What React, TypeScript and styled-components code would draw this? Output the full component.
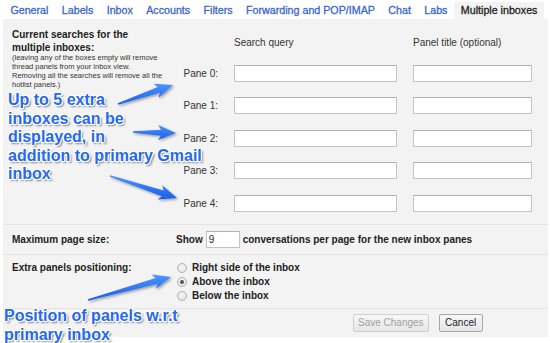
import styled, { createGlobalStyle } from "styled-components";

const GlobalStyle = createGlobalStyle`
  html, body {
    margin: 0;
    padding: 0;
    background: #ffffff;
  }
  body {
    font-family: "Liberation Sans", Arial, sans-serif;
  }
`;

const Page = styled.div`
  position: relative;
  width: 550px;
  height: 343px;
  overflow: hidden;
  background: #ffffff;
  color: #222222;
  font-family: "Liberation Sans", Arial, sans-serif;
`;

const TabBar = styled.div`
  display: flex;
  align-items: flex-end;
  height: 19px;
  padding-left: 4px;
  gap: 0.6px;
`;

const Tab = styled.div<{ $active?: boolean }>`
  height: 17px;
  line-height: 17px;
  padding: 0 6.4px;
  font-size: 10.7px;
  white-space: nowrap;
  color: ${(p) => (p.$active ? "#222222" : "#3b66d0")};
  background: ${(p) => (p.$active ? "#f3f3f3" : "transparent")};
  -webkit-text-stroke: 0.3px currentColor;
`;

const Panel = styled.div`
  margin: 0 2px 0 3px;
  height: 318px;
  background: #f3f3f3;
`;

const Section = styled.div`
  display: grid;
  grid-template-columns: 164px 1fr;
  padding-left: 9px;
  border-bottom: 1px solid #e4e4e4;
`;

const SearchSection = styled(Section)`
  grid-template-columns: 160px 1fr;
  padding-top: 9px;
  height: 196px;
`;

const Intro = styled.div``;

const Heading = styled.div`
  font-size: 10px;
  font-weight: bold;
  line-height: 13px;
`;

const Note = styled.div`
  margin-top: -1px;
  font-size: 7.5px;
  line-height: 9px;
  color: #333333;
  white-space: nowrap;
`;

const PaneGrid = styled.div`
  display: grid;
  grid-template-columns: 46px 163px 119px;
  grid-template-rows: 13px;
  grid-auto-rows: 17px;
  column-gap: 16px;
  row-gap: 15.5px;
  margin-top: 8px;
  align-items: center;
`;

const ColHead = styled.div`
  font-size: 10px;
  line-height: 13px;
  color: #333333;
`;

const PaneLabel = styled.div`
  font-size: 10px;
  text-align: right;
  color: #333333;
`;

const TextBox = styled.div<{ $w?: number }>`
  box-sizing: border-box;
  height: 17px;
  width: ${(p) => (p.$w ? `${p.$w}px` : "auto")};
  background: #ffffff;
  border: 1px solid #c4c4c4;
  border-top-color: #b0b0b0;
  font-size: 10px;
  line-height: 15px;
  padding-left: 2px;
`;

const RowSection = styled(Section)`
  height: 29px;
  align-items: center;
`;

const BoldText = styled.span`
  font-size: 10px;
  font-weight: bold;
  line-height: 14px;
`;

const Inline = styled.div`
  display: flex;
  align-items: center;
  gap: 3px;
`;

const RadioSection = styled(Section)`
  padding-top: 6px;
  height: 47px;
  align-items: start;
`;

const RadioList = styled.div`
  display: flex;
  flex-direction: column;
  padding-left: 1px;
`;

const RadioRow = styled.div`
  display: flex;
  align-items: center;
  gap: 5px;
  height: 14px;
`;

const Radio = styled.span<{ $checked?: boolean }>`
  box-sizing: border-box;
  width: 10px;
  height: 10px;
  border-radius: 50%;
  border: 1px solid #b3b3b3;
  background: radial-gradient(circle at 50% 40%, #f8f8f8 0%, #dcdcdc 100%);
  display: flex;
  align-items: center;
  justify-content: center;
  &::after {
    content: "";
    width: 4px;
    height: 4px;
    border-radius: 50%;
    background: #555555;
    display: ${(p) => (p.$checked ? "block" : "none")};
  }
`;

const Actions = styled.div`
  display: flex;
  gap: 10px;
  padding: 5px 0 0 350px;
`;

const Button = styled.div<{ $disabled?: boolean }>`
  box-sizing: border-box;
  height: 18px;
  line-height: 16px;
  padding: 0 4px;
  min-width: 44px;
  text-align: center;
  font-size: 10px;
  color: ${(p) => (p.$disabled ? "#a0a0a0" : "#222222")};
  border: 1px solid ${(p) => (p.$disabled ? "#cfcfcf" : "#a8a8a8")};
  border-radius: 2px;
  background: linear-gradient(#f8f8f8, #e6e6e6);
`;

const Callout = styled.div<{ $top: number; $left: number }>`
  position: absolute;
  top: ${(p) => p.$top}px;
  left: ${(p) => p.$left}px;
  font-size: 16px;
  font-weight: bold;
  line-height: 18.6px;
  color: #2569f0;
  text-shadow: -1px -1px 0 #fff, 1px -1px 0 #fff, -1px 1px 0 #fff,
    1px 1px 0 #fff, 0 1px 0 #fff, 1px 0 0 #fff, 2px 2px 2px rgba(0, 0, 0, 0.5);
  white-space: nowrap;
`;

const Overlay = styled.svg`
  position: absolute;
  left: 0;
  top: 0;
  pointer-events: none;
`;

const tabs = [
  "General",
  "Labels",
  "Inbox",
  "Accounts",
  "Filters",
  "Forwarding and POP/IMAP",
  "Chat",
  "Labs",
  "Multiple inboxes",
];

const arrows: [number, number, number, number][] = [
  [118, 104, 173, 85],
  [133, 132, 176, 133],
  [110, 176, 177, 198],
  [88, 300, 171, 277],
];

function arrowPoints(x1: number, y1: number, x2: number, y2: number) {
  const dx = x2 - x1;
  const dy = y2 - y1;
  const len = Math.hypot(dx, dy);
  const ux = dx / len;
  const uy = dy / len;
  const nx = -uy;
  const ny = ux;
  const head = 15;
  const nkx = x2 - ux * head;
  const nky = y2 - uy * head;
  const bx = x2 - ux * (head + 3);
  const by = y2 - uy * (head + 3);
  const p = (x: number, y: number) => `${x.toFixed(1)},${y.toFixed(1)}`;
  return [
    p(x1 + nx * 0.8, y1 + ny * 0.8),
    p(nkx + nx * 3, nky + ny * 3),
    p(bx + nx * 7.5, by + ny * 7.5),
    p(x2, y2),
    p(bx - nx * 7.5, by - ny * 7.5),
    p(nkx - nx * 3, nky - ny * 3),
    p(x1 - nx * 0.8, y1 - ny * 0.8),
  ].join(" ");
}

const panes = [0, 1, 2, 3, 4];

export default function App() {
  return (
    <Page>
      <GlobalStyle />
      <TabBar>
        {tabs.map((t) => (
          <Tab key={t} $active={t === "Multiple inboxes"}>
            {t}
          </Tab>
        ))}
      </TabBar>
      <Panel>
        <SearchSection>
          <Intro>
            <Heading>
              Current searches for the
              <br />
              multiple inboxes:
            </Heading>
            <Note>
              (leaving any of the boxes empty will remove
              <br />
              thread panels from your inbox view.
              <br />
              Removing all the searches will remove all the
              <br />
              hotlist panels.)
            </Note>
          </Intro>
          <PaneGrid>
            <span />
            <ColHead>Search query</ColHead>
            <ColHead>Panel title (optional)</ColHead>
            {panes.map((n) => [
              <PaneLabel key={`l${n}`}>Pane {n}:</PaneLabel>,
              <TextBox key={`q${n}`} />,
              <TextBox key={`t${n}`} />,
            ])}
          </PaneGrid>
        </SearchSection>
        <RowSection>
          <BoldText>Maximum page size:</BoldText>
          <Inline>
            <BoldText>Show</BoldText>
            <TextBox $w={34}>9</TextBox>
            <BoldText>conversations per page for the new inbox panes</BoldText>
          </Inline>
        </RowSection>
        <RadioSection>
          <BoldText>Extra panels positioning:</BoldText>
          <RadioList>
            <RadioRow>
              <Radio />
              <BoldText>Right side of the inbox</BoldText>
            </RadioRow>
            <RadioRow>
              <Radio $checked />
              <BoldText>Above the inbox</BoldText>
            </RadioRow>
            <RadioRow>
              <Radio />
              <BoldText>Below the inbox</BoldText>
            </RadioRow>
          </RadioList>
        </RadioSection>
        <Actions>
          <Button $disabled>Save Changes</Button>
          <Button>Cancel</Button>
        </Actions>
      </Panel>

      <Callout $top={91} $left={8}>
        Up to 5 extra
        <br />
        inboxes can be
        <br />
        displayed, in
        <br />
        addition to primary Gmail
        <br />
        inbox
      </Callout>
      <Callout $top={307} $left={4}>
        Position of panels w.r.t
        <br />
        primary inbox
      </Callout>

      <Overlay width="550" height="343" viewBox="0 0 550 343">
        <defs>
          <linearGradient id="arrowFill" x1="0" y1="0" x2="0" y2="1">
            <stop offset="0" stopColor="#4b94ff" />
            <stop offset="1" stopColor="#1a5fe6" />
          </linearGradient>
          <filter id="arrowShadow" x="-20%" y="-50%" width="140%" height="200%">
            <feDropShadow dx="1.5" dy="1.5" stdDeviation="1.2" floodColor="#000" floodOpacity="0.35" />
          </filter>
        </defs>
        {arrows.map(([a, b, c, d], i) => (
          <polygon
            key={i}
            points={arrowPoints(a, b, c, d)}
            fill="url(#arrowFill)"
            filter="url(#arrowShadow)"
          />
        ))}
      </Overlay>
    </Page>
  );
}
